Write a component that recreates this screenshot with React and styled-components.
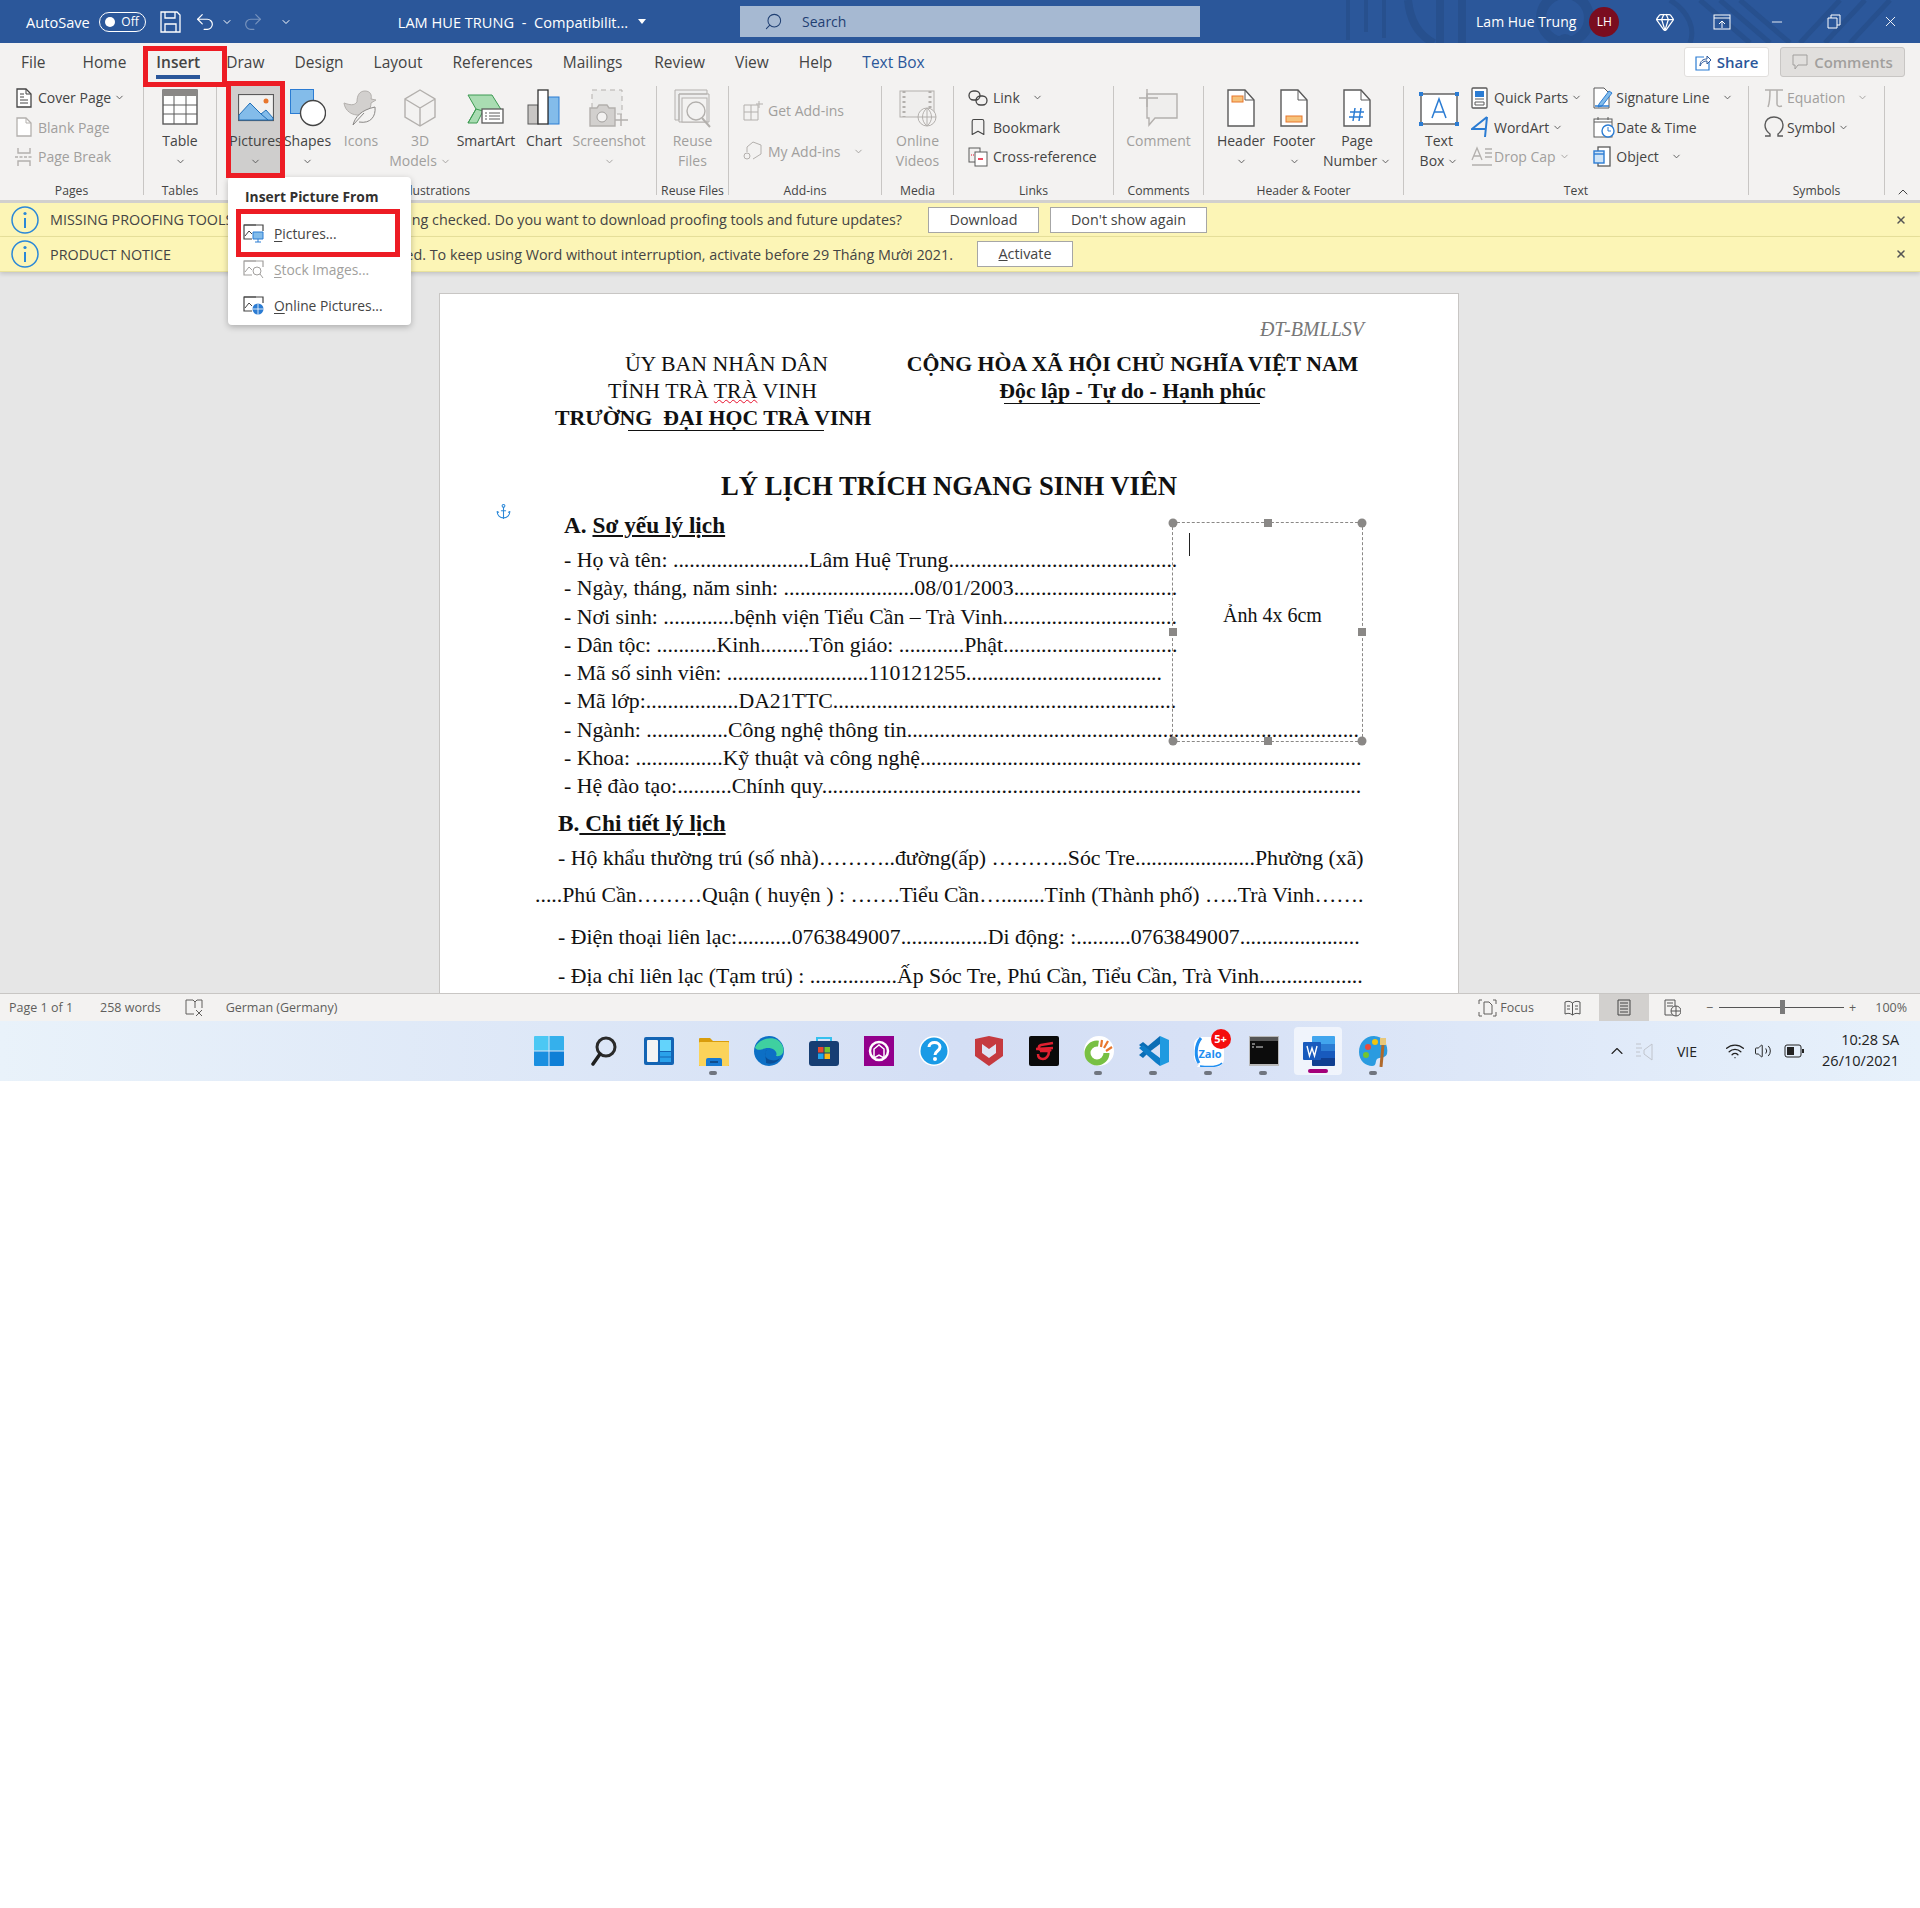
import React from "react";
import styled, { createGlobalStyle } from "styled-components";
import { Anchor, Bookmark, ChevronDown, ChevronUp, Gem, Minus, Redo2, Search, Undo2, Volume2, Wifi, X } from "lucide-react";

const GlobalStyle = createGlobalStyle`
  html, body { margin: 0; padding: 0; background: #fff; }
  body { font-family: "Open Sans", "Liberation Sans", sans-serif; color: #3b3a39; }
`;

const dots = (n) => ".".repeat(n);

/* ---------- ribbon icons ---------- */
const Pic = ({ w = 36, h = 36, vb, children }) => (
  <svg width={w} height={h} viewBox={vb || `0 0 ${w} ${h}`} fill="none">{children}</svg>
);
const dark = "#5a5a5a";
const grey = "#b3b0ad";
const blue = "#2b7cd3";

const TableIcon = () => (
  <Pic>
    <rect x="1" y="1" width="34" height="34" fill="#fff" stroke={dark} strokeWidth="1.4" />
    <rect x="1" y="1" width="34" height="6" fill="#8a8886" />
    <path d="M12 7v28M24 7v28M1 16h34M1 25h34" stroke={dark} />
  </Pic>
);
const PictureIcon = () => (
  <Pic h={28} w={36}>
    <rect x=".5" y=".5" width="35" height="26" fill="#f1f1f0" stroke={dark} strokeWidth="1.2" />
    <path d="M1 26V21L12 9l11 11 5-4 7 8v2z" fill="#83bcea" stroke="#1f6fb8" />
    <path d="M23 20l7 6" stroke="#1f6fb8" />
    <circle cx="28" cy="7" r="2.5" fill="#e8762c" />
  </Pic>
);
const ShapesIcon = () => (
  <Pic w={36} h={38}>
    <rect x=".5" y=".5" width="23" height="24" fill="#83bcea" stroke="#2b7cd3" />
    <circle cx="23" cy="24" r="12.5" fill="#fff" stroke="#444" strokeWidth="1.4" />
  </Pic>
);
const IconsIcon = () => (
  <Pic w={36} h={38}>
    <path d="M1 14c6 2 10 3 13-1 0-6 2-11 8-11s7 5 6 8l5 1-5 3c0 6-4 12-10 12-9 1-16-4-17-12z" fill="#d2d0ce" stroke={grey} />
    <path d="M10 36c2-8 8-15 22-18 1 9-4 17-16 15M10 36l11-12" fill="#f3f2f1" stroke="#8a8886" />
  </Pic>
);
const CubeIcon = () => (
  <Pic w={34} h={38}>
    <path d="M17 1l15 9v18l-15 9-15-9V10zM2 10l15 9 15-9M17 19v18" fill="#f3f2f1" stroke={grey} strokeWidth="1.4" />
  </Pic>
);
const SmartArtIcon = () => (
  <Pic w={38} h={36}>
    <path d="M1 3h24l10 16H16l-6 12H1l8-14z" fill="#a9dcb2" stroke="#3c9a52" />
    <path d="M1 31l8-14L16 19" stroke="#3c9a52" />
    <rect x="15" y="17" width="21" height="14" fill="#fff" stroke={dark} strokeWidth="1.3" />
    <path d="M18 21h2M22 21h11M18 24h2M22 24h11M18 27h2M22 27h11" stroke={dark} />
  </Pic>
);
const ChartIcon = () => (
  <Pic w={34} h={36}>
    <rect x="1" y="16" width="10" height="19" fill="#c8c6c4" stroke={dark} />
    <rect x="21" y="8" width="11" height="27" fill="#83bcea" stroke="#2b7cd3" />
    <rect x="11" y="1" width="10" height="34" fill="#fff" stroke="#333" strokeWidth="1.3" />
  </Pic>
);
const ScreenshotIcon = () => (
  <Pic w={40} h={38}>
    <rect x="3" y="1" width="30" height="24" fill="#ececeb" stroke={grey} strokeDasharray="5 4" />
    <path d="M1 19h7l2-3h8l2 3h6v18H1z" fill="#d2d0ce" stroke={grey} strokeWidth="1.4" />
    <circle cx="13" cy="28" r="5" fill="#f3f2f1" stroke="#a19f9d" />
    <path d="M32 25v12M26 31h13" stroke={grey} strokeWidth="1.4" />
  </Pic>
);
const ReuseIcon = () => (
  <Pic w={38} h={40}>
    <path d="M1 1h32v4H5v26H1zM5 5h30v28H5z" fill="#eee" stroke={grey} />
    <rect x="8" y="9" width="25" height="24" fill="#f3f2f1" stroke={grey} />
    <circle cx="22" cy="22" r="9" fill="#f3f2f1" stroke={grey} strokeWidth="1.4" />
    <path d="M28 29l8 9" stroke={grey} strokeWidth="2" />
  </Pic>
);
const VideoIcon = () => (
  <Pic w={38} h={38}>
    <rect x="1" y="2" width="34" height="26" fill="#efeeed" stroke={grey} />
    <path d="M5 2v26M31 2v26" stroke={grey} strokeDasharray="2 3" strokeWidth="3" />
    <circle cx="28" cy="28" r="9" fill="#f3f2f1" stroke={grey} />
    <path d="M19 28h18M28 19v18M28 19c-6 5-6 13 0 18M28 19c6 5 6 13 0 18" stroke={grey} />
  </Pic>
);
const CommentIcon = () => (
  <Pic w={40} h={38}>
    <path d="M8 5h30v24H16l-6 7v-7H8z" fill="#efeeed" stroke={grey} strokeWidth="1.4" />
    <path d="M8 0v18M0 9h19" stroke={grey} strokeWidth="1.4" />
  </Pic>
);
const DocIcon = ({ band, hash }) => (
  <Pic w={28} h={38}>
    <path d="M1 1h17l9 10v26H1z" fill="#fff" stroke={dark} strokeWidth="1.4" />
    <path d="M18 1v10h9" stroke={dark} />
    {band === "top" && <rect x="5" y="7" width="11" height="6" fill="#f6c27a" stroke="#e8762c" />}
    {band === "bottom" && <rect x="6" y="27" width="16" height="6" fill="#f6c27a" stroke="#e8762c" />}
    {hash && <path d="M12 19l-2 13M18 19l-2 13M7 23h14M6 28h14" stroke={blue} strokeWidth="1.5" />}
  </Pic>
);
const TextBoxIcon = () => (
  <Pic w={40} h={36}>
    <rect x="2" y="3" width="36" height="30" fill="#fff" stroke={dark} strokeWidth="1.4" />
    <path d="M13 27l7-19 7 19M15.5 21h9" stroke={blue} strokeWidth="1.5" />
    <path d="M0 1h4v4H0zM36 1h4v4h-4zM0 31h4v4H0zM36 31h4v4h-4z" fill={blue} />
  </Pic>
);
const SmallDoc = ({ color = "#444", lines = true }) => (
  <Pic w={18} h={20}>
    <path d="M2 1h9l5 5v13H2z" fill="#fff" stroke={color} strokeWidth="1.300" />
    <path d="M11 1v5h5" stroke={color} />
    {lines && <path d="M5 6h4M5 9h4M5 12h8M5 15h8" stroke={color} />}
  </Pic>
);
const PageBreakIcon = () => (
  <Pic w={18} h={20}>
    <path d="M3 1v5h12V1M3 19v-5h12v5" stroke={grey} strokeWidth="1.4" />
    <path d="M0 10h18" stroke={grey} strokeWidth="1.4" strokeDasharray="3 1.500" />
  </Pic>
);
const AddInsIcon = () => (
  <Pic w={20} h={20}>
    <path d="M1 4h14v15H1zM1 11h14M8 4v15M16 0v7M13 3h7" stroke={grey} />
  </Pic>
);
const MyAddInsIcon = () => (
  <Pic w={20} h={20}>
    <path d="M4 11V6l6-5 8 3v9l-8 5" stroke={grey} />
    <circle cx="4" cy="15" r="3" stroke={grey} />
  </Pic>
);
const LinkIcon = () => (
  <Pic w={20} h={16}>
    <rect x="1" y="1" width="11" height="9" rx="4.500" stroke="#444" strokeWidth="1.300" />
    <rect x="8" y="6" width="11" height="9" rx="4.500" stroke="#444" strokeWidth="1.300" />
  </Pic>
);
const CrossRefIcon = () => (
  <Pic w={20} h={20}>
    <rect x="1" y="1" width="11" height="14" fill="#f3f2f1" stroke={dark} />
    <rect x="7" y="5" width="12" height="14" fill="#fff" stroke={dark} />
    <path d="M3 8h3" stroke="#e8112d" strokeDasharray="1 1" /><path d="M10 12h5" stroke="#e8112d" strokeWidth="1.5" />
  </Pic>
);
const QuickPartsIcon = () => (
  <Pic w={18} h={22}>
    <rect x="1" y="1" width="15" height="20" rx="1" fill="#fff" stroke={dark} strokeWidth="1.3" />
    <rect x="4" y="4" width="9" height="6" fill={blue} />
    <path d="M4 12h9M4 15h9v3H4z" stroke={dark} />
  </Pic>
);
const SignatureIcon = () => (
  <Pic w={20} h={22}>
    <path d="M1 1h10l5 5v15H1z" fill="#fff" stroke={dark} />
    <path d="M6 17l10-13 3 2-10 13-4 1z" fill="#83bcea" stroke={blue} />
    <path d="M2 19h14" stroke={blue} strokeWidth="1.5" />
  </Pic>
);
const WordArtIcon = () => (
  <Pic w={18} h={22}>
    <path d="M16 1l-2 20M16 1L1 13h14" stroke={blue} strokeWidth="2" />
  </Pic>
);
const DateIcon = () => (
  <Pic w={22} h={22}>
    <rect x="1" y="3" width="18" height="18" fill="#fff" stroke={dark} />
    <path d="M1 6h18M5 1v3M15 1v3" stroke={dark} />
    <circle cx="15" cy="15" r="6" fill="#fff" stroke={blue} strokeWidth="1.4" />
    <path d="M15 11v4h3" stroke={blue} />
  </Pic>
);
const DropCapIcon = () => (
  <Pic w={22} h={22}>
    <path d="M1 14L6 2l5 12M3 10h6M14 3h7M14 7h7M14 11h7M1 19h20" stroke={grey} strokeWidth="1.3" />
  </Pic>
);
const ObjectIcon = () => (
  <Pic w={20} h={22}>
    <rect x="5" y="1" width="12" height="19" fill="#fff" stroke={dark} strokeWidth="1.3" />
    <rect x="1" y="5" width="10" height="12" fill="#cfe4f7" stroke={blue} strokeWidth="1.4" />
    <path d="M1 8h10" stroke={blue} strokeWidth="1.4" />
  </Pic>
);
const EquationIcon = () => (
  <Pic w={20} h={22}>
    <path d="M1 3h18M6 3c0 6 0 12-2 17M13 3v14c0 2 2 3 5 2" stroke={grey} strokeWidth="1.5" />
  </Pic>
);
const OmegaIcon = () => (
  <Pic w={20} h={22}>
    <path d="M1 20h5v-2C2 15 1 12 1 9c0-5 4-8 9-8s9 3 9 8c0 3-1 6-5 9v2h5" stroke={dark} strokeWidth="1.4" />
  </Pic>
);
const ShareIcon = () => (
  <Pic w={16} h={18}>
    <path d="M9 4H1v13h13V9" stroke={blue} strokeWidth="1.2" />
    <path d="M5 13c0-5 3-7 7-7V3l4 4-4 4V8c-3 0-5 1-7 5z" fill="#fff" stroke="#2b579a" />
  </Pic>
);
const BubbleIcon = () => (
  <Pic w={16} h={16}>
    <path d="M1 1h14v10H6l-3 4v-4H1z" stroke="#a19f9d" />
  </Pic>
);
const InfoIcon = () => (
  <Pic w={28} h={28}>
    <circle cx="14" cy="14" r="13" fill="#fcf5b6" stroke="#2b88d8" strokeWidth="1.5" />
    <circle cx="14" cy="7.5" r="1.6" fill="#2b88d8" />
    <path d="M14 12v10" stroke="#2b88d8" strokeWidth="2" />
  </Pic>
);
const MenuPic = ({ kind }) => {
  const line = kind === "stock" ? "#a19f9d" : "#444";
  return (
    <Pic w={21} h={20}>
      <path d="M13 2H1v14h8" stroke={line} strokeWidth="1.2" />
      <path d="M1 2h19v6" stroke={line} strokeWidth="1.2" />
      <path d="M2 13l4-5 3 3" stroke={line} />
      {kind === "pc" && <path d="M10 9h10v7H10zM15 16v3M12 19h6" fill="#83bcea" stroke={blue} />}
      {kind === "stock" && <><circle cx="14" cy="12" r="4" stroke={line} /><path d="M17 15l3 4" stroke={line} /></>}
      {kind === "web" && <><circle cx="15" cy="14" r="5.5" fill={blue} /><path d="M9.5 14h11M15 8.500v11" stroke="#fff" strokeWidth=".8" /></>}
    </Pic>
  );
};

/* ---------- taskbar icons ---------- */
const TaskIcon = ({ name }) => {
  switch (name) {
    case "start":
      return <Pic w={30} h={30}><path d="M1 0h13.500v14.500H0V1a1 1 0 0 1 1-1z" fill="#4cc8f4" /><path d="M15.500 0H29a1 1 0 0 1 1 1v13.500H15.500z" fill="#35b0ec" /><path d="M0 15.500h14.500V30H1a1 1 0 0 1-1-1z" fill="#1a8fe0" /><path d="M15.500 15.500H30V29a1 1 0 0 1-1 1H15.500z" fill="#0f7fd6" /></Pic>;
    case "search":
      return <Pic w={28} h={30}><circle cx="16" cy="11" r="9" stroke="#2a2a2a" strokeWidth="3" /><path d="M10 18l-7 10" stroke="#1f1f1f" strokeWidth="3.500" strokeLinecap="round" /></Pic>;
    case "widgets":
      return <Pic w={30} h={30}><rect width="30" height="28" y="1" rx="2" fill="#1364b4" /><rect x="3" y="4" width="11" height="22" rx="1" fill="#f4f4f4" /><rect x="16" y="4" width="11" height="11" fill="#63d3fb" /><rect x="16" y="16" width="11" height="4.500" fill="#2aa2ea" /><rect x="16" y="21.500" width="11" height="4.500" fill="#2aa2ea" /></Pic>;
    case "folder":
      return <Pic w={30} h={30}><path d="M0 3a1 1 0 0 1 1-1h10l3 3h16v25H0z" fill="#d99d0c" /><rect y="6" width="30" height="24" rx="1" fill="#fbd35a" /><path d="M7 24a2 2 0 0 1 2-2h12a2 2 0 0 1 2 2v6H7z" fill="#1679d3" /><path d="M11 26h8" stroke="#0c3f78" strokeWidth="1.500" /></Pic>;
    case "edge":
      return <Pic w={30} h={30}><circle cx="15" cy="15" r="15" fill="#0c6fc5" /><path d="M1 12C4 2 24-3 29 11c2 6-2 10-7 9 2-4-2-8-8-8-5 0-9 4-13 0z" fill="#3fd0a0" /><path d="M13 14c-4 3-2 9 4 10 3 1 7 0 9-2-2 4-8 7-14 5 1-2-3-12 1-13z" fill="#0a4f98" /></Pic>;
    case "store":
      return <Pic w={30} h={30}><path d="M8 7V2h14v5" stroke="#35c0ee" strokeWidth="2" /><rect y="5" width="30" height="25" rx="3" fill="#173e73" /><rect x="9" y="11" width="5.500" height="5.500" fill="#e8492d" /><rect x="15.500" y="11" width="5.500" height="5.500" fill="#73c52e" /><rect x="9" y="17.500" width="5.500" height="5.500" fill="#20a4ea" /><rect x="15.500" y="17.500" width="5.500" height="5.500" fill="#fab914" /></Pic>;
    case "purple":
      return <Pic w={30} h={30}><rect width="30" height="30" fill="#93008c" /><circle cx="15" cy="15" r="9" stroke="#fff" strokeWidth="2.500" /><path d="M10 22v-9l5-4 5 4v9l-5-3z" stroke="#fff" strokeWidth="1.500" /></Pic>;
    case "help":
      return <Pic w={30} h={30}><circle cx="15" cy="15" r="15" fill="#fff" /><circle cx="15" cy="15" r="13.500" fill="#1a9be6" /><path d="M10 11c0-6 11-6 11 0 0 4-5 4-5 8" stroke="#fff" strokeWidth="3" /><circle cx="16" cy="23" r="2" fill="#fff" /></Pic>;
    case "mcafee":
      return <Pic w={28} h={30}><path d="M0 3l14-3 14 3v17L14 30 0 20z" fill="#c53a3f" /><path d="M7 8l7 5 7-5v9l-7 5-7-5z" fill="#dfe4f4" /></Pic>;
    case "garena":
      return <Pic w={30} h={30}><rect width="30" height="30" rx="2" fill="#0a0a0a" /><path d="M24 7l-12 2c-3 1-3 5 1 5h9l-2 1h-9M20 15c0 5-3 8-6 8-4 0-5-3-5-5M7 13l17-1" stroke="#e02030" strokeWidth="2.500" /></Pic>;
    case "coccoc":
      return <Pic w={30} h={30}><circle cx="15" cy="15" r="15" fill="#fff" /><circle cx="13" cy="17" r="9.500" stroke="#78c043" strokeWidth="6" strokeDasharray="46 14" /><path d="M18 4l-1 7M24 5l-4 7M28 11l-6 4" stroke="#e8762c" strokeWidth="2.200" /></Pic>;
    case "vscode":
      return <Pic w={30} h={30}><path d="M21 0l9 4v22l-9 4z" fill="#1f9ae0" /><path d="M21 0v8l-12 9-5 5-4-3 6-5-6-5 4-3 5 4z" fill="#0b6db5" /><path d="M21 30v-8L9 13l-5-4-4 3 17 15z" fill="#0e7cc7" /></Pic>;
    case "terminal":
      return <Pic w={30} h={30}><rect width="30" height="30" fill="#b9b9b9" /><rect x="1" y="1" width="28" height="4" fill="#555" /><rect x="1" y="5" width="28" height="23" fill="#0c0c0c" /><path d="M3 8h3M3 11h2M7 11h7" stroke="#ddd" /></Pic>;
    case "word":
      return <Pic w={32} h={30}><path d="M9 1a1 1 0 0 1 1-1h21a1 1 0 0 1 1 1v7H9z" fill="#41a5ee" /><path d="M9 8h23v7H9z" fill="#2b7cd3" /><path d="M9 15h23v7H9z" fill="#185abd" /><path d="M9 22h23v7a1 1 0 0 1-1 1H10a1 1 0 0 1-1-1z" fill="#103f91" /><rect y="6" width="18" height="18" rx="1" fill="#185abd" /><path d="M4 10l2.500 10L9 12l2.500 8L14 10" stroke="#fff" strokeWidth="1.400" /></Pic>;
    case "paint":
      return <Pic w={30} h={32}><path d="M15 1C6 1 0 8 0 17s7 14 13 14c5 0 3-5 5-7s8 0 10-5C30 10 24 1 15 1z" fill="#2a9be0" /><circle cx="9" cy="12" r="3" fill="#e74c3c" /><circle cx="16" cy="7" r="3" fill="#f1c40f" /><circle cx="7" cy="20" r="3" fill="#73c52e" /><path d="M24 10l-2 22" stroke="#b06a2c" strokeWidth="3" /><path d="M21 3h6v7h-6z" fill="#e8c87a" /></Pic>;
    default:
      return null;
  }
};

const ZaloIcon = () => (
  <Pic w={30} h={32}>
    <path d="M8 2h14a8 8 0 0 1 8 8v14a8 8 0 0 1-8 8H8l-5 0 2-3a8 8 0 0 1-5-7V10a8 8 0 0 1 8-8z" fill="#fff" />
    <path d="M7 3C1 10 1 22 5 28" stroke="#1f8ef1" strokeWidth="3" />
    <path d="M6 31c8 1 18 1 22-3" stroke="#1f8ef1" strokeWidth="1.500" />
  </Pic>
);

/* ---------- layout ---------- */
const Screen = styled.div`
  position: relative;
  width: 1920px;
  height: 1908px;
  overflow: hidden;
  background: #fff;
`;

const TitleBar = styled.div`
  position: relative;
  display: flex;
  align-items: center;
  height: 43px;
  background: #2b579a;
  color: #fff;
  font-size: 14.6px;
  overflow: hidden;
`;
const TitleArt = styled.svg`
  position: absolute;
  right: 0;
  top: 0;
`;
const TitleItem = styled.div`
  position: relative;
  display: flex;
  align-items: center;
  flex: none;
  margin-left: ${(p) => p.$ml || 0}px;
  width: ${(p) => (p.$w ? `${p.$w}px` : "auto")};
  opacity: ${(p) => p.$dim || 1};
  white-space: nowrap;
`;
const UserName = styled(TitleItem)`
  font-size: 14px;
`;
const Toggle = styled.div`
  display: flex;
  align-items: center;
  justify-content: space-between;
  box-sizing: border-box;
  margin-left: 9px;
  width: 47px;
  height: 20px;
  padding: 0 6px 0 5px;
  border: 1px solid #fff;
  border-radius: 10px;
  font-size: 12px;
  &::before {
    content: "";
    width: 10px;
    height: 10px;
    border-radius: 50%;
    background: #fff;
  }
`;
const SearchBox = styled.div`
  display: flex;
  align-items: center;
  gap: 19px;
  flex: none;
  box-sizing: border-box;
  margin-left: ${(p) => p.$ml}px;
  width: 460px;
  height: 31px;
  padding-left: 24px;
  background: #a6b9d2;
  color: #1f3f72;
  font-size: 14px;
`;
const FlippedSearch = styled(Search).attrs({ size: 19, strokeWidth: 1.3 })`
  transform: scaleX(-1);
`;
const Avatar = styled.div`
  position: relative;
  display: flex;
  align-items: center;
  justify-content: center;
  flex: none;
  margin-left: 13px;
  width: 30px;
  height: 30px;
  border-radius: 50%;
  background: #7a0d1f;
  font-size: 12px;
`;

const TabRow = styled.div`
  display: flex;
  align-items: center;
  box-sizing: border-box;
  height: 42px;
  padding: 0 0 4px 6px;
  background: #f3f2f1;
`;
const Tab = styled.div`
  position: relative;
  margin-right: ${(p) => p.$after || 0}px;
  padding: 0 15px;
  font-size: 15.5px;
  line-height: 38px;
  font-weight: ${(p) => (p.$active ? 600 : 400)};
  color: ${(p) => (p.$context ? "#2b579a" : "#444")};
  ${(p) => p.$active && `
    &::after {
      content: "";
      position: absolute;
      left: 15px;
      right: 15px;
      bottom: 2px;
      height: 4px;
      background: #2b579a;
    }
  `}
`;
const TabActions = styled.div`
  display: flex;
  gap: 11px;
  margin-left: auto;
  padding-right: 15px;
`;
const ShareButton = styled.div`
  display: flex;
  align-items: center;
  justify-content: center;
  gap: 6px;
  box-sizing: border-box;
  width: 85px;
  height: 30px;
  background: #fff;
  border: 1px solid #e1dfdd;
  border-radius: 3px;
  color: #2b579a;
  font-size: 15px;
  font-weight: 600;
`;
const CommentsButton = styled(ShareButton)`
  width: 125px;
  background: #e1dfdd;
  border-color: #c8c6c4;
  color: #a19f9d;
`;

const Ribbon = styled.div`
  position: relative;
  display: flex;
  height: 115px;
  background: #f3f2f1;
  border-bottom: 3px solid #d2d0ce;
`;
const Group = styled.div`
  display: flex;
  flex-direction: column;
  flex: none;
  box-sizing: border-box;
  width: ${(p) => p.$w}px;
  height: 109px;
  margin-top: 1px;
  border-right: 1px solid #c8c6c4;
`;
const GroupBody = styled.div`
  display: flex;
  flex: 1;
  min-height: 0;
  gap: ${(p) => p.$gap || 0}px;
  padding-left: ${(p) => p.$pl || 0}px;
`;
const GroupLabel = styled.div`
  height: 15px;
  margin-bottom: -3px;
  text-align: center;
  font-size: 12.2px;
  line-height: 15px;
  color: #444;
  white-space: nowrap;
`;
const BigButton = styled.div`
  display: flex;
  flex-direction: column;
  align-items: center;
  flex: none;
  box-sizing: border-box;
  width: ${(p) => p.$w}px;
  height: 89px;
  padding-top: 3px;
  background: ${(p) => (p.$on ? "#cfcecd" : "transparent")};
  color: ${(p) => (p.$off ? "#a19f9d" : "#444")};
  font-size: 14px;
  line-height: 20px;
  white-space: nowrap;
`;
const BigIcon = styled.div`
  display: flex;
  align-items: flex-start;
  justify-content: center;
  height: ${(p) => 42 - (p.$pt || 0)}px;
  padding-top: ${(p) => p.$pt || 0}px;
`;
const LabelLine = styled.div`
  display: flex;
  align-items: center;
  justify-content: center;
  gap: 3px;
  height: 20px;
`;
const Stack = styled.div`
  display: flex;
  flex-direction: column;
  flex: none;
  margin: -3px 0 0 ${(p) => p.$ml || 0}px;
  padding-top: ${(p) => p.$pt || 0}px;
  gap: ${(p) => p.$gap || 0}px;
`;
const SmallRow = styled.div`
  display: flex;
  align-items: center;
  height: 29.500px;
  color: ${(p) => (p.$off ? "#a19f9d" : "#444")};
  font-size: 14px;
  white-space: nowrap;
`;
const SmallIcon = styled.span`
  display: flex;
  align-items: center;
  justify-content: flex-start;
  flex: none;
  width: ${(p) => p.$w || 23}px;
`;
const Caret = styled(ChevronDown).attrs({ size: 11, strokeWidth: 2 })`
  flex: none;
  margin-left: ${(p) => p.$ml ?? 3}px;
  color: ${(p) => (p.$off ? "#a19f9d" : "#555")};
`;
const CollapseButton = styled(ChevronUp).attrs({ size: 16, strokeWidth: 1.5 })`
  position: absolute;
  right: 9px;
  bottom: 0;
  color: #444;
`;

const NoticeRow = styled.div`
  display: flex;
  align-items: center;
  box-sizing: border-box;
  height: ${(p) => p.$h}px;
  padding-left: 11px;
  background: #fcf5b6;
  border-bottom: 1px solid #e9e29c;
  ${(p) => p.$last && "box-shadow: 0 2px 4px rgba(0,0,0,.15); position: relative;"}
  font-size: 14.35px;
  color: #444;
`;
const NoticeTitle = styled.div`
  flex: none;
  margin-left: 11px;
  width: 172px;
  white-space: nowrap;
`;
const NoticeText = styled.div`
  display: flex;
  justify-content: flex-end;
  flex: none;
  width: ${(p) => p.$w}px;
  white-space: nowrap;
`;
const NoticeButton = styled.div`
  flex: none;
  box-sizing: border-box;
  margin-left: ${(p) => p.$ml}px;
  width: ${(p) => p.$w}px;
  height: 26px;
  background: #fff;
  border: 1px solid #a6a6a6;
  text-align: center;
  line-height: 24px;
`;
const NoticeClose = styled(X).attrs({ size: 12, strokeWidth: 3 })`
  position: absolute;
  right: 13px;
  color: #555;
`;

const DocArea = styled.div`
  height: 721px;
  overflow: hidden;
  background: #e6e6e6;
`;
const Page = styled.div`
  position: relative;
  box-sizing: border-box;
  width: 1020px;
  height: 900px;
  margin: 21px 0 0 439px;
  padding: 22px 94px 0 0;
  background: #fff;
  border: 1px solid #c8c6c4;
  font-family: "Liberation Serif", "Times New Roman", serif;
  font-size: 21.8px;
  color: #111;
`;
const DocCode = styled.div`
  height: 26px;
  text-align: right;
  font-size: 20px;
  line-height: 26px;
  font-style: italic;
  color: #777;
`;
const DocHeader = styled.div`
  display: flex;
  gap: 35px;
  margin: 9px 0 0 115px;
  line-height: 27px;
  white-space: nowrap;
`;
const HeaderLeft = styled.div`
  width: 315px;
  text-align: center;
`;
const LeadLine = styled.div`
  padding-left: 28px;
`;
const HeaderRight = styled.div`
  width: 455px;
  text-align: center;
  font-weight: 700;
`;
const Ruled = styled.span`
  position: relative;
  display: inline-block;
  font-weight: 700;
  &::after {
    content: "";
    position: absolute;
    left: ${(p) => p.$from}px;
    right: ${(p) => p.$to}px;
    bottom: 1px;
    height: 1.500px;
    background: #111;
  }
`;
const Squiggle = styled.span`
  text-decoration: underline wavy #e8112d 1px;
`;
const DocTitle = styled.h1`
  margin: 37px 0 0 94px;
  text-align: center;
  font-size: 26.67px;
  line-height: 34px;
  font-weight: 700;
`;
const DocHeading = styled.h2`
  margin: ${(p) => p.$top}px 0 0 ${(p) => p.$left}px;
  font-size: 23.3px;
  line-height: 28px;
  font-weight: 700;
  u { text-underline-offset: 2px; text-decoration-thickness: 2px; }
`;
const DocLines = styled.div`
  display: flex;
  flex-direction: column;
  margin: 7px 0 0 124px;
  line-height: 28.25px;
  white-space: nowrap;
`;
const FreeLine = styled.div`
  margin: ${(p) => p.$top}px 0 0 ${(p) => p.$left}px;
  line-height: 28px;
  white-space: nowrap;
`;
const AnchorMark = styled(Anchor).attrs({ size: 17, strokeWidth: 1.500 })`
  position: absolute;
  left: 55px;
  top: 209px;
  color: #2b88d8;
`;
const TextFrame = styled.div`
  position: absolute;
  left: 732px;
  top: 228px;
  box-sizing: border-box;
  width: 191px;
  height: 220px;
  border: 1px dashed #8a8886;
  font-size: 20px;
`;
const Caption = styled.div`
  position: absolute;
  left: 0;
  right: -10px;
  top: 81px;
  text-align: center;
`;
const Cursor = styled.div`
  position: absolute;
  left: 16px;
  top: 10px;
  width: 1px;
  height: 23px;
  background: #222;
`;
const Handle = styled.span`
  position: absolute;
  left: ${(p) => p.$x};
  top: ${(p) => p.$y};
  width: ${(p) => (p.$round ? 9 : 8)}px;
  height: ${(p) => (p.$round ? 9 : 8)}px;
  transform: translate(-50%, -50%);
  border-radius: ${(p) => (p.$round ? "50%" : 0)};
  background: #8a8886;
`;

const StatusBar = styled.div`
  display: flex;
  align-items: center;
  box-sizing: border-box;
  height: 28px;
  padding-left: 9px;
  background: #f3f2f1;
  border-top: 1px solid #c8c6c4;
  font-size: 12.5px;
  color: #605e5c;
  white-space: nowrap;
`;
const StatusItem = styled.span`
  display: flex;
  align-items: center;
  justify-content: center;
  flex: none;
  gap: 3px;
  margin-left: ${(p) => p.$ml || 0}px;
`;
const ActiveView = styled.span`
  display: flex;
  align-items: center;
  justify-content: center;
  flex: none;
  margin-left: ${(p) => p.$ml}px;
  width: 50px;
  height: 27px;
  background: #d2d0ce;
`;
const ZoomTrack = styled.div`
  position: relative;
  flex: none;
  margin-left: 6px;
  width: 125px;
  height: 1px;
  background: #555;
  &::after {
    content: "";
    position: absolute;
    left: 61px;
    top: -7px;
    width: 5px;
    height: 14px;
    background: #7a7a7a;
  }
`;

const TaskBar = styled.div`
  display: flex;
  align-items: center;
  box-sizing: border-box;
  height: 60px;
  padding-left: 521px;
  background: linear-gradient(90deg, #e9f2fa 0%, #d4dff5 50%, #d7e1f6 62%, #e7f1fb 100%);
`;
const TaskSlot = styled.div`
  position: relative;
  display: flex;
  align-items: center;
  justify-content: center;
  flex: none;
  width: 55px;
  height: 60px;
  ${(p) => p.$open && `
    &::after {
      content: "";
      position: absolute;
      left: 23px;
      bottom: 6px;
      width: 8px;
      height: 4px;
      border-radius: 2px;
      background: #70757f;
    }
  `}
`;
const ActiveTile = styled.div`
  position: absolute;
  left: 3px;
  top: 6px;
  width: 48px;
  height: 48px;
  border-radius: 4px;
  background: rgba(255,255,255,.6);
  &::after {
    content: "";
    position: absolute;
    left: 14px;
    bottom: 2px;
    width: 20px;
    height: 4px;
    border-radius: 2px;
    background: #a4007a;
  }
`;
const TaskGlyph = styled.span`
  position: relative;
  display: flex;
`;
const ZaloWord = styled.span`
  position: absolute;
  left: 5px;
  top: 11px;
  font-size: 11px;
  font-weight: 700;
  color: #1f8ef1;
`;
const Badge = styled.span`
  position: absolute;
  right: -7px;
  top: -6px;
  width: 20px;
  height: 20px;
  border-radius: 50%;
  background: #f40d0d;
  color: #fff;
  font-size: 11px;
  font-weight: 700;
  line-height: 20px;
  text-align: center;
`;
const Tray = styled.div`
  display: flex;
  align-items: center;
  flex: none;
  margin-left: ${(p) => p.$ml}px;
  font-size: 14px;
  color: #222;
`;
const TrayItem = styled.span`
  display: flex;
  flex: none;
  margin-left: ${(p) => p.$ml || 0}px;
`;
const Clock = styled.div`
  flex: none;
  margin: -3px 0 0 15px;
  width: 80px;
  text-align: right;
  font-size: 14.5px;
  line-height: 21px;
  color: #222;
  white-space: nowrap;
`;

const PicturesMenu = styled.div`
  position: absolute;
  left: 228px;
  top: 177px;
  box-sizing: border-box;
  width: 183px;
  height: 148px;
  padding: 10px 0 0 17px;
  background: #fff;
  border-radius: 4px;
  box-shadow: 0 2px 6px rgba(0,0,0,.25);
  font-size: 13.8px;
`;
const MenuTitle = styled.div`
  height: 22px;
  font-weight: 700;
  line-height: 20px;
  color: #323130;
`;
const MenuRows = styled.div`
  display: flex;
  flex-direction: column;
  margin: 6px 0 0 -2px;
`;
const MenuRow = styled.div`
  display: flex;
  align-items: center;
  gap: 10px;
  height: 36px;
  color: ${(p) => (p.$off ? "#a19f9d" : "#444")};
  u { text-underline-offset: 2px; }
`;
const RedFrame = styled.div`
  position: absolute;
  left: ${(p) => p.$x}px;
  top: ${(p) => p.$y}px;
  box-sizing: border-box;
  width: ${(p) => p.$w}px;
  height: ${(p) => p.$h}px;
  border: 5px solid #ed1c24;
  pointer-events: none;
`;

const tabs = ["File", "Home", "Insert", "Draw", "Design", "Layout", "References", "Mailings", "Review", "View", "Help"];
const tabNudge = { File: 7, Insert: -4, Mailings: 2 };

const taskItems = [
  { name: "start" }, { name: "search" }, { name: "widgets" }, { name: "folder", open: true },
  { name: "edge" }, { name: "store" }, { name: "purple" }, { name: "help" }, { name: "mcafee" },
  { name: "garena" }, { name: "coccoc", open: true }, { name: "vscode", open: true },
  { name: "zalo", open: true }, { name: "terminal", open: true }, { name: "word", active: true }, { name: "paint", open: true },
];

function App() {
  return (
    <Screen>
      <GlobalStyle />

      <TitleBar>
        <TitleArt width="580" height="43" viewBox="0 0 580 43" fill="none" stroke="#27508e">
          <path d="M8 0v40M26 0v32M44 0v38" strokeWidth="4" />
          <path d="M68 0c2 20 10 35 26 43M100 0v43M122 0v43" strokeWidth="8" />
          <circle cx="225" cy="18" r="24" strokeWidth="10" />
          <circle cx="225" cy="43" r="7" strokeWidth="4" />
          <path d="M330 0c20 12 25 30 20 43M360 0l50 43M380 0l50 43M400 0l50 43M500 0l-40 43M525 0l-40 43M550 0l-40 43" strokeWidth="5" />
        </TitleArt>
        <TitleItem $ml={26}>AutoSave<Toggle>Off</Toggle></TitleItem>
        <TitleItem $ml={14}>
          <Pic w={21} h={22}>
            <path d="M1 1h16l3 3v17H1z" stroke="#fff" strokeWidth="1.300" />
            <path d="M5 1v6h10V1M5 21v-8h11v8" stroke="#fff" strokeWidth="1.300" />
          </Pic>
        </TitleItem>
        <TitleItem $ml={13}><Undo2 size={22} strokeWidth={1.300} /></TitleItem>
        <TitleItem $ml={5}><ChevronDown size={12} /></TitleItem>
        <TitleItem $ml={9} $dim={0.35}><Redo2 size={22} strokeWidth={1.300} /></TitleItem>
        <TitleItem $ml={16}><ChevronDown size={12} /></TitleItem>
        <TitleItem $ml={106}>LAM HUE TRUNG&nbsp; - &nbsp;Compatibilit...</TitleItem>
        <TitleItem $ml={9}>
          <Pic w={10} h={6}><path d="M1 0h8L5 5z" fill="#fff" /></Pic>
        </TitleItem>
        <SearchBox $ml={93}><FlippedSearch />Search</SearchBox>
        <UserName $ml={276}>Lam Hue Trung</UserName>
        <Avatar>LH</Avatar>
        <TitleItem $ml={36}><Gem size={20} strokeWidth={1.500} /></TitleItem>
        <TitleItem $ml={38}>
          <Pic w={18} h={16}>
            <rect x="1" y="1" width="16" height="14" stroke="#fff" />
            <path d="M1 4h16M9 14V7M6 10l3-3 3 3" stroke="#fff" />
          </Pic>
        </TitleItem>
        <TitleItem $ml={38}><Minus size={16} strokeWidth={1.300} /></TitleItem>
        <TitleItem $ml={42}>
          <Pic w={14} h={15}>
            <path d="M1 4h9v10H1zM4 4V1h9v10h-3" stroke="#fff" />
          </Pic>
        </TitleItem>
        <TitleItem $ml={41}><X size={17} strokeWidth={1.300} /></TitleItem>
      </TitleBar>

      <TabRow>
        {tabs.map((tab) => (
          <Tab key={tab} $active={tab === "Insert"} $after={tabNudge[tab]}>{tab}</Tab>
        ))}
        <Tab $context>Text Box</Tab>
        <TabActions>
          <ShareButton><ShareIcon />Share</ShareButton>
          <CommentsButton><BubbleIcon />Comments</CommentsButton>
        </TabActions>
      </TabRow>

      <Ribbon>
        <Group $w={144}>
          <GroupBody $pl={15}>
            <Stack>
              <SmallRow><SmallIcon><SmallDoc /></SmallIcon>Cover Page<Caret /></SmallRow>
              <SmallRow $off><SmallIcon><SmallDoc color={grey} lines={false} /></SmallIcon>Blank Page</SmallRow>
              <SmallRow $off><SmallIcon><PageBreakIcon /></SmallIcon>Page Break</SmallRow>
            </Stack>
          </GroupBody>
          <GroupLabel>Pages</GroupLabel>
        </Group>

        <Group $w={73}>
          <GroupBody>
            <BigButton $w={72}>
              <BigIcon><TableIcon /></BigIcon>
              <LabelLine>Table</LabelLine>
              <LabelLine><Caret $ml={0} /></LabelLine>
            </BigButton>
          </GroupBody>
          <GroupLabel>Tables</GroupLabel>
        </Group>

        <Group $w={440}>
          <GroupBody $pl={13}>
            <BigButton $w={51} $on>
              <BigIcon $pt={5}><PictureIcon /></BigIcon>
              <LabelLine>Pictures</LabelLine>
              <LabelLine><Caret $ml={0} /></LabelLine>
            </BigButton>
            <BigButton $w={53}>
              <BigIcon><ShapesIcon /></BigIcon>
              <LabelLine>Shapes</LabelLine>
              <LabelLine><Caret $ml={0} /></LabelLine>
            </BigButton>
            <BigButton $w={54} $off>
              <BigIcon><IconsIcon /></BigIcon>
              <LabelLine>Icons</LabelLine>
            </BigButton>
            <BigButton $w={64} $off>
              <BigIcon><CubeIcon /></BigIcon>
              <LabelLine>3D</LabelLine>
              <LabelLine>Models<Caret $ml={0} $off /></LabelLine>
            </BigButton>
            <BigButton $w={68}>
              <BigIcon $pt={3}><SmartArtIcon /></BigIcon>
              <LabelLine>SmartArt</LabelLine>
            </BigButton>
            <BigButton $w={48}>
              <BigIcon><ChartIcon /></BigIcon>
              <LabelLine>Chart</LabelLine>
            </BigButton>
            <BigButton $w={82} $off>
              <BigIcon><ScreenshotIcon /></BigIcon>
              <LabelLine>Screenshot</LabelLine>
              <LabelLine><Caret $ml={0} $off /></LabelLine>
            </BigButton>
          </GroupBody>
          <GroupLabel>Illustrations</GroupLabel>
        </Group>

        <Group $w={72}>
          <GroupBody>
            <BigButton $w={71} $off>
              <BigIcon><ReuseIcon /></BigIcon>
              <LabelLine>Reuse</LabelLine>
              <LabelLine>Files</LabelLine>
            </BigButton>
          </GroupBody>
          <GroupLabel>Reuse Files</GroupLabel>
        </Group>

        <Group $w={153}>
          <GroupBody $pl={14}>
            <Stack $pt={13} $gap={11}>
              <SmallRow $off><SmallIcon $w={25}><AddInsIcon /></SmallIcon>Get Add-ins</SmallRow>
              <SmallRow $off><SmallIcon $w={25}><MyAddInsIcon /></SmallIcon>My Add-ins<Caret $ml={12} $off /></SmallRow>
            </Stack>
          </GroupBody>
          <GroupLabel>Add-ins</GroupLabel>
        </Group>

        <Group $w={72}>
          <GroupBody>
            <BigButton $w={71} $off>
              <BigIcon><VideoIcon /></BigIcon>
              <LabelLine>Online</LabelLine>
              <LabelLine>Videos</LabelLine>
            </BigButton>
          </GroupBody>
          <GroupLabel>Media</GroupLabel>
        </Group>

        <Group $w={160}>
          <GroupBody $pl={14}>
            <Stack>
              <SmallRow><SmallIcon $w={25}><LinkIcon /></SmallIcon>Link<Caret $ml={12} /></SmallRow>
              <SmallRow><SmallIcon $w={25}><Bookmark size={20} strokeWidth={1.300} /></SmallIcon>Bookmark</SmallRow>
              <SmallRow><SmallIcon $w={25}><CrossRefIcon /></SmallIcon>Cross-reference</SmallRow>
            </Stack>
          </GroupBody>
          <GroupLabel>Links</GroupLabel>
        </Group>

        <Group $w={90}>
          <GroupBody>
            <BigButton $w={89} $off>
              <BigIcon><CommentIcon /></BigIcon>
              <LabelLine>Comment</LabelLine>
            </BigButton>
          </GroupBody>
          <GroupLabel>Comments</GroupLabel>
        </Group>

        <Group $w={200}>
          <GroupBody $pl={11}>
            <BigButton $w={52}>
              <BigIcon><DocIcon band="top" /></BigIcon>
              <LabelLine>Header</LabelLine>
              <LabelLine><Caret $ml={0} /></LabelLine>
            </BigButton>
            <BigButton $w={54}>
              <BigIcon><DocIcon band="bottom" /></BigIcon>
              <LabelLine>Footer</LabelLine>
              <LabelLine><Caret $ml={0} /></LabelLine>
            </BigButton>
            <BigButton $w={72}>
              <BigIcon><DocIcon hash /></BigIcon>
              <LabelLine>Page</LabelLine>
              <LabelLine>Number<Caret $ml={0} /></LabelLine>
            </BigButton>
          </GroupBody>
          <GroupLabel>Header &amp; Footer</GroupLabel>
        </Group>

        <Group $w={345}>
          <GroupBody $pl={5}>
            <BigButton $w={60}>
              <BigIcon $pt={2}><TextBoxIcon /></BigIcon>
              <LabelLine>Text</LabelLine>
              <LabelLine>Box<Caret $ml={0} /></LabelLine>
            </BigButton>
            <Stack $ml={2}>
              <SmallRow><SmallIcon><QuickPartsIcon /></SmallIcon>Quick Parts<Caret /></SmallRow>
              <SmallRow><SmallIcon><WordArtIcon /></SmallIcon>WordArt<Caret /></SmallRow>
              <SmallRow $off><SmallIcon><DropCapIcon /></SmallIcon>Drop Cap<Caret $off /></SmallRow>
            </Stack>
            <Stack $ml={11}>
              <SmallRow><SmallIcon><SignatureIcon /></SmallIcon>Signature Line<Caret $ml={12} /></SmallRow>
              <SmallRow><SmallIcon><DateIcon /></SmallIcon>Date &amp; Time</SmallRow>
              <SmallRow><SmallIcon><ObjectIcon /></SmallIcon>Object<Caret $ml={12} /></SmallRow>
            </Stack>
          </GroupBody>
          <GroupLabel>Text</GroupLabel>
        </Group>

        <Group $w={136}>
          <GroupBody $pl={15}>
            <Stack>
              <SmallRow $off><SmallIcon><EquationIcon /></SmallIcon>Equation<Caret $ml={12} $off /></SmallRow>
              <SmallRow><SmallIcon><OmegaIcon /></SmallIcon>Symbol<Caret /></SmallRow>
            </Stack>
          </GroupBody>
          <GroupLabel>Symbols</GroupLabel>
        </Group>
        <CollapseButton />
      </Ribbon>

      <NoticeRow $h={34}>
        <InfoIcon />
        <NoticeTitle>MISSING PROOFING TOOLS</NoticeTitle>
        <NoticeText $w={680}>being checked. Do you want to download proofing tools and future updates?</NoticeText>
        <NoticeButton $ml={26} $w={111}>Download</NoticeButton>
        <NoticeButton $ml={11} $w={157}>Don't show again</NoticeButton>
        <NoticeClose />
      </NoticeRow>
      <NoticeRow $h={35} $last>
        <InfoIcon />
        <NoticeTitle>PRODUCT NOTICE</NoticeTitle>
        <NoticeText $w={731}>activated. To keep using Word without interruption, activate before 29 Tháng Mười 2021.</NoticeText>
        <NoticeButton $ml={24} $w={96}><u>A</u>ctivate</NoticeButton>
        <NoticeClose />
      </NoticeRow>

      <DocArea>
        <Page>
          <AnchorMark />
          <DocCode>ĐT-BMLLSV</DocCode>
          <DocHeader>
            <HeaderLeft>
              <LeadLine>ỦY BAN NHÂN DÂN</LeadLine>
              <div>TỈNH TRÀ <Squiggle>TRÀ</Squiggle> VINH</div>
              <Ruled $from={73} $to={47}>TRƯỜNG&nbsp; ĐẠI HỌC TRÀ VINH</Ruled>
            </HeaderLeft>
            <HeaderRight>
              <div>CỘNG HÒA XÃ HỘI CHỦ NGHĨA VIỆT NAM</div>
              <Ruled $from={5} $to={6}>Độc lập - Tự do - Hạnh phúc</Ruled>
            </HeaderRight>
          </DocHeader>
          <DocTitle>LÝ LỊCH TRÍCH NGANG SINH VIÊN</DocTitle>
          <DocHeading $top={8} $left={124}>A. <u>Sơ yếu lý lịch</u></DocHeading>
          <DocLines>
            <div>- Họ và tên: {dots(25)}Lâm Huệ Trung{dots(42)}</div>
            <div>- Ngày, tháng, năm sinh: {dots(24)}08/01/2003{dots(30)}</div>
            <div>- Nơi sinh: {dots(13)}bệnh viện Tiểu Cần – Trà Vinh{dots(32)}</div>
            <div>- Dân tộc: {dots(11)}Kinh{dots(9)}Tôn giáo: {dots(12)}Phật{dots(32)}</div>
            <div>- Mã số sinh viên: {dots(26)}110121255{dots(36)}</div>
            <div>- Mã lớp:{dots(17)}DA21TTC{dots(63)}</div>
            <div>- Ngành: {dots(15)}Công nghệ thông tin{dots(83)}</div>
            <div>- Khoa: {dots(16)}Kỹ thuật và công nghệ{dots(81)}</div>
            <div>- Hệ đào tạo:{dots(10)}Chính quy{dots(99)}</div>
          </DocLines>
          <DocHeading $top={9} $left={118}>B.<u> Chi tiết lý lịch</u></DocHeading>
          <FreeLine $top={7} $left={118}>- Hộ khẩu thường trú (số nhà)………..đường(ấp) ………..Sóc Tre......................Phường (xã)</FreeLine>
          <FreeLine $top={9} $left={95}>.....Phú Cần………Quận ( huyện ) : …….Tiểu Cần…........Tỉnh (Thành phố) …..Trà Vinh…….</FreeLine>
          <FreeLine $top={14} $left={118}>- Điện thoại liên lạc:..........0763849007................Di động: :..........0763849007......................</FreeLine>
          <FreeLine $top={11} $left={118}>- Địa chỉ liên lạc (Tạm trú) : ................Ấp Sóc Tre, Phú Cần, Tiểu Cần, Trà Vinh...................</FreeLine>

          <TextFrame>
            <Cursor />
            <Caption>Ảnh 4x 6cm</Caption>
            <Handle $round $x="0" $y="0" />
            <Handle $x="50%" $y="0" />
            <Handle $round $x="100%" $y="0" />
            <Handle $x="0" $y="50%" />
            <Handle $x="100%" $y="50%" />
            <Handle $round $x="0" $y="100%" />
            <Handle $x="50%" $y="100%" />
            <Handle $round $x="100%" $y="100%" />
          </TextFrame>
        </Page>
      </DocArea>

      <StatusBar>
        <StatusItem>Page 1 of 1</StatusItem>
        <StatusItem $ml={27}>258 words</StatusItem>
        <StatusItem $ml={24}>
          <Pic w={18} h={18}><path d="M1 1h7l2 2 2-2h5v8M1 1v14h8M10 3v6M11 11l6 6M17 11l-6 6" stroke="#605e5c" /></Pic>
        </StatusItem>
        <StatusItem $ml={23}>German (Germany)</StatusItem>
        <StatusItem $ml={1141}>
          <Pic w={19} h={18}><path d="M1 5V1h3M15 1h3v4M1 13v4h3M15 17h3v-4M6 3h5l3 3v9H6z" stroke="#605e5c" /></Pic>
          Focus
        </StatusItem>
        <StatusItem $ml={30}>
          <Pic w={17} h={16}><path d="M1 2c3-1 5-1 7.500 1 2.500-2 4.500-2 7.500-1v12c-3-1-5-1-7.500 1-2.500-2-4.500-2-7.500-1zM8.500 3v12M3 6h3M3 9h3M11 6h3M11 9h3" stroke="#555" /></Pic>
        </StatusItem>
        <ActiveView $ml={18}>
          <Pic w={14} h={17}><path d="M1 1h12v15H1zM3 4h8M3 7h8M3 10h8M3 13h8" stroke="#444" /></Pic>
        </ActiveView>
        <StatusItem $ml={15}>
          <Pic w={17} h={18}><path d="M1 1h10v15H1zM3 4h6M3 7h6" stroke="#555" /><circle cx="12" cy="12" r="5" fill="#f3f2f1" stroke="#555" /><path d="M7 12h10M12 7v10" stroke="#555" /></Pic>
        </StatusItem>
        <StatusItem $ml={25}>−</StatusItem>
        <ZoomTrack />
        <StatusItem $ml={5}>+</StatusItem>
        <StatusItem $ml={19}>100%</StatusItem>
      </StatusBar>

      <TaskBar>
        {taskItems.map((item) => (
          <TaskSlot key={item.name} $open={item.open}>
            {item.active && <ActiveTile />}
            <TaskGlyph>
              {item.name === "zalo" ? (
                <>
                  <ZaloIcon />
                  <ZaloWord>Zalo</ZaloWord>
                  <Badge>5+</Badge>
                </>
              ) : (
                <TaskIcon name={item.name} />
              )}
            </TaskGlyph>
          </TaskSlot>
        ))}
        <Tray $ml={206}>
          <TrayItem><ChevronUp size={20} strokeWidth={1.300} /></TrayItem>
          <TrayItem $ml={8}>
            <Pic w={18} h={22}><path d="M1 4h5M1 8h6M1 12h4M1 16h5M9 10l8-6v16l-8-6z" stroke="#c0c4cc" /></Pic>
          </TrayItem>
          <TrayItem $ml={24}>VIE</TrayItem>
          <TrayItem $ml={28}><Wifi size={20} strokeWidth={1.600} /></TrayItem>
          <TrayItem $ml={9}><Volume2 size={18} strokeWidth={1.300} /></TrayItem>
          <TrayItem $ml={12}>
            <Pic w={20} h={14}><rect x="1" y="1" width="16" height="12" rx="2" stroke="#222" /><rect x="3" y="3" width="7" height="8" fill="#222" /><rect x="18" y="5" width="2" height="4" fill="#222" /></Pic>
          </TrayItem>
        </Tray>
        <Clock>10:28 SA<br />26/10/2021</Clock>
      </TaskBar>

      <PicturesMenu>
        <MenuTitle>Insert Picture From</MenuTitle>
        <MenuRows>
          <MenuRow><MenuPic kind="pc" /><span><u>P</u>ictures...</span></MenuRow>
          <MenuRow $off><MenuPic kind="stock" /><span><u>S</u>tock Images...</span></MenuRow>
          <MenuRow><MenuPic kind="web" /><span><u>O</u>nline Pictures...</span></MenuRow>
        </MenuRows>
      </PicturesMenu>

      <RedFrame $x={143} $y={46} $w={84} $h={41} />
      <RedFrame $x={226} $y={81} $w={59} $h={97} />
      <RedFrame $x={236} $y={209} $w={164} $h={48} />
    </Screen>
  );
}

export default App;
